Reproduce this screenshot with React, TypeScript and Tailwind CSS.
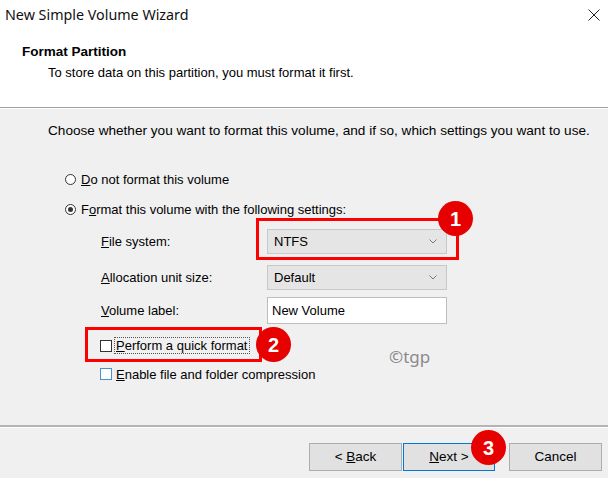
import React from 'react'

// ── Small Win32-style controls ───────────────────────────────────────────────

function Radio({ checked }: { checked?: boolean }) {
  return (
    <span className="w-[11px] h-[11px] rounded-full border border-[#333] bg-white flex items-center justify-center shrink-0">
      {checked && <span className="w-[5px] h-[5px] rounded-full bg-[#333]" />}
    </span>
  )
}

function Check({ blue }: { blue?: boolean }) {
  return (
    <span
      className={
        blue
          ? 'w-[12px] h-[12px] border border-[#4a90d9] bg-white shrink-0'
          : 'w-[12px] h-[12px] border border-[#333] bg-white shrink-0'
      }
    />
  )
}

function Combo({ value }: { value: string }) {
  return (
    <div className="w-[180px] h-[25px] bg-[#e5e5e5] border border-[#c8c8c8] flex items-center justify-between pl-[6px] pr-[9px]">
      <span>{value}</span>
      <svg width="8" height="5" viewBox="0 0 8 5">
        <path d="M0.5 0.5 L4 4 L7.5 0.5" fill="none" stroke="#7a7a7a" strokeWidth="1" />
      </svg>
    </div>
  )
}

function Badge({ n }: { n: number }) {
  return (
    <span className="absolute w-[35px] h-[35px] rounded-full bg-[#e60000] text-white font-bold text-[20px] flex items-center justify-center font-['Liberation_Sans',sans-serif]">
      {n}
    </span>
  )
}

// ── Wizard ───────────────────────────────────────────────────────────────────

export default function App() {
  return (
    <div className="relative w-[608px] h-[478px] bg-[#f0f0f0] flex flex-col overflow-hidden text-[13px] text-black font-['Liberation_Sans',Arial,sans-serif]">
      {/* header */}
      <div className="bg-white h-[107px] shrink-0">
        <div className="h-[30px] flex items-center justify-between pl-[5px] pr-[8px]">
          <span className="text-[14.3px] text-[#111] font-['Noto_Sans',sans-serif]">New Simple Volume Wizard</span>
          <svg width="12" height="12" viewBox="0 0 12 12">
            <path d="M0.5 0.5 L11.5 11.5 M11.5 0.5 L0.5 11.5" stroke="#222" strokeWidth="1" />
          </svg>
        </div>
        <div className="pl-[22px] pt-[14px]">
          <div className="font-bold text-[13.5px] leading-[16px]">Format Partition</div>
          <div className="pl-[26px] pt-[5px] text-[13px] leading-[16px]">To store data on this partition, you must format it first.</div>
        </div>
      </div>
      <div className="h-px bg-[#a0a0a0] shrink-0" />
      <div className="h-px bg-white shrink-0" />

      {/* body */}
      <div className="flex-1 flex flex-col pl-[48px] pt-[12px]">
        <p className="text-[13.6px]">Choose whether you want to format this volume, and if so, which settings you want to use.</p>

        <div className="pl-[17px] pt-[30px] flex flex-col">
          <label className="flex items-center gap-[5px] h-[16px]">
            <Radio />
            <span><u>D</u>o not format this volume</span>
          </label>
          <label className="flex items-center gap-[5px] h-[16px] mt-[14px]">
            <Radio checked />
            <span>F<u>o</u>rmat this volume with the following settings:</span>
          </label>

          <div className="pl-[36px] pt-[12px] flex flex-col">
            <div className="flex items-center">
              <span className="w-[166px]"><u>F</u>ile system:</span>
              <Combo value="NTFS" />
            </div>
            <div className="flex items-center mt-[11px]">
              <span className="w-[166px]"><u>A</u>llocation unit size:</span>
              <Combo value="Default" />
            </div>
            <div className="flex items-center mt-[7px]">
              <span className="w-[166px]"><u>V</u>olume label:</span>
              <div className="w-[180px] h-[27px] bg-white border border-[#bdbdbd] flex items-center pl-[4px]">New Volume</div>
            </div>
          </div>

          <div className="pl-[35px] pt-[13px] flex flex-col gap-[12px]">
            <label className="flex items-center gap-[2px] h-[17px]">
              <Check />
              <span className="border border-dotted border-[#555] px-[1px] leading-[15px]"><u>P</u>erform a quick format</span>
            </label>
            <label className="flex items-center gap-[4px] h-[16px]">
              <Check blue />
              <span><u>E</u>nable file and folder compression</span>
            </label>
          </div>
        </div>
      </div>

      {/* footer */}
      <div className="h-[2px] bg-[#b4b4b4] shrink-0" />
      <div className="h-px bg-white shrink-0" />
      <div className="h-[50px] shrink-0 flex items-start justify-end gap-[7px] pr-[6px] pt-[15px]">
        <button className="w-[93px] h-[28px] bg-[#e1e1e1] border border-[#adadad] text-[13.5px]">&lt; <u>B</u>ack</button>
        <button className="w-[92px] h-[28px] bg-[#e1e1e1] border border-[#0078d7] text-[13.5px] -ml-[6px]"><u>N</u>ext &gt;</button>
        <button className="w-[93px] h-[28px] bg-[#e1e1e1] border border-[#adadad] text-[13.5px] ml-[7px]">Cancel</button>
      </div>

      {/* annotations */}
      <div className="absolute left-[256px] top-[218px] w-[203px] h-[42px] border-[3px] border-[#ff0000]" />
      <div className="absolute left-[85px] top-[327px] w-[177px] h-[35px] border-[3px] border-[#ff0000]" />
      <div className="absolute left-[438px] top-[201px]"><Badge n={1} /></div>
      <div className="absolute left-[256px] top-[327px]"><Badge n={2} /></div>
      <div className="absolute left-[471px] top-[430px]"><Badge n={3} /></div>
      <span className="absolute left-[389px] top-[344px] text-[17px] text-[#8a8a8a] font-['Noto_Sans',sans-serif]">©tgp</span>
    </div>
  )
}
